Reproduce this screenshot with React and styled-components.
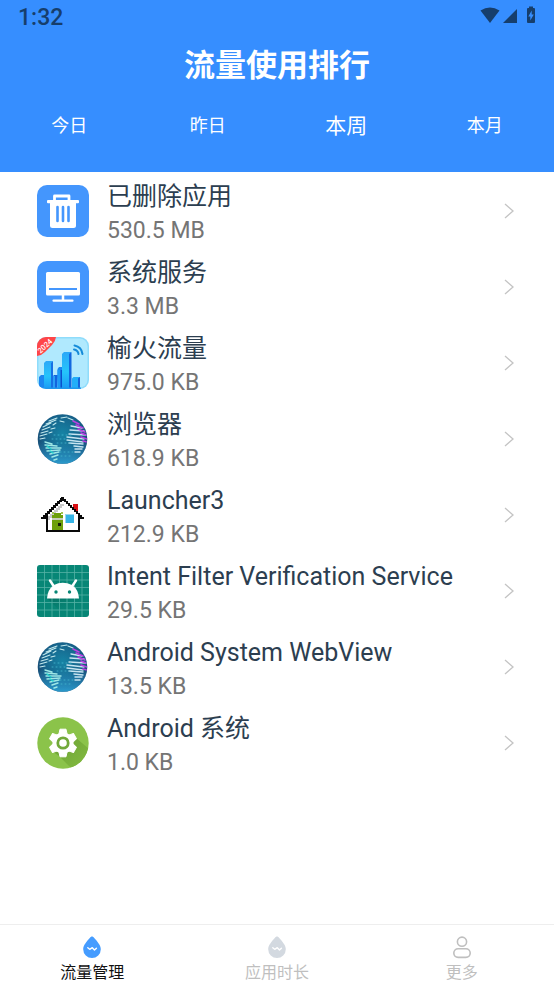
// App.jsx
import React, { useState } from 'react';
import styled, { createGlobalStyle } from 'styled-components';

const GlobalStyle = createGlobalStyle`
    * {
        box-sizing: border-box;
    }

    body {
        margin: 0;
        background: #ffffff;
        font-family: Roboto, 'Noto Sans CJK SC', sans-serif;
    }

    button {
        margin: 0;
        padding: 0;
        border: 0;
        background: none;
        color: inherit;
        font: inherit;
        cursor: pointer;
    }
`;

const Page = styled.div`
    display: flex;
    flex-direction: column;
    min-height: 100vh;
`;

const Header = styled.header`
    background: #368eff;
    color: #ffffff;
    padding-bottom: 20px;
`;

const StatusBar = styled.div`
    display: flex;
    align-items: center;
    justify-content: space-between;
    height: 32px;
    padding: 0 17px 0 18px;
    color: #163e6c;
`;

const Clock = styled.span`
    font-size: 23px;
    font-weight: 500;
    line-height: 32px;
    padding-top: 4px;
`;

const StatusIcons = styled.svg`
    display: block;
    width: 60px;
    height: 32px;
`;

const Title = styled.h1`
    margin: 0;
    font-size: 31px;
    font-weight: 700;
    line-height: 68px;
    text-align: center;
`;

const Tabs = styled.nav`
    display: grid;
    grid-template-columns: repeat(4, 1fr);
    height: 52px;
`;

const Tab = styled.button`
    font-size: ${props => (props.$active ? '21px' : '18px')};
    line-height: 52px;
`;

const AppList = styled.ul`
    flex: 1;
    margin: 0;
    padding: 1px 0 0;
    list-style: none;
`;

const AppRow = styled.button`
    display: flex;
    align-items: center;
    width: 100%;
    height: 76px;
    padding: 0 39px 0 37px;
    text-align: left;
`;

const AppIcon = styled.svg`
    flex: none;
    width: 52px;
    height: 52px;
`;

const AppInfo = styled.span`
    flex: 1;
    min-width: 0;
    margin-left: 18px;
`;

const AppName = styled.span`
    display: block;
    color: #2c3e50;
    font-size: 25px;
    line-height: 40px;
    white-space: nowrap;
    overflow: hidden;
    text-overflow: ellipsis;
`;

const AppUsage = styled.span`
    display: block;
    color: #757575;
    font-size: 23px;
    line-height: 28px;
`;

const Chevron = styled.svg`
    flex: none;
    width: 12px;
    height: 18px;
    fill: none;
    stroke: #c4c4c4;
    stroke-width: 1.3;
`;

const BottomNav = styled.nav`
    display: grid;
    grid-template-columns: repeat(3, 1fr);
    height: 60px;
    border-top: 1px solid #eeeeee;
`;

const NavItem = styled.button`
    display: flex;
    flex-direction: column;
    align-items: center;
    padding-top: 10px;
    color: ${props => (props.$active ? '#111111' : '#bfbfbf')};
`;

const NavIcon = styled.svg`
    width: 24px;
    height: 24px;
`;

const NavLabel = styled.span`
    font-size: 16px;
    line-height: 28px;
`;

const TrashIcon = () => (
    <AppIcon viewBox="0 0 52 52" aria-hidden="true">
        <rect width="52" height="52" rx="10" fill="#4496fd" />
        <path d="M17.5 16v-5h14.5v5" fill="none" stroke="#fff" strokeWidth="2.8" strokeLinejoin="round" />
        <rect x="10" y="15" width="32" height="3.2" rx="1" fill="#fff" />
        <path d="M13 17h26v23.500a2.500 2.500 0 0 1-2.500 2.500h-21a2.500 2.500 0 0 1-2.500-2.500z" fill="#fff" />
        <path d="M20.500 22v14M26 22v14M31.500 22v14" stroke="#4496fd" strokeWidth="2.600" strokeLinecap="round" />
    </AppIcon>
);

const MonitorIcon = () => (
    <AppIcon viewBox="0 0 52 52" aria-hidden="true">
        <rect width="52" height="52" rx="10" fill="#4496fd" />
        <rect x="9" y="11" width="34" height="23.500" rx="1.500" fill="#fff" />
        <path d="M12 28h28" stroke="#4496fd" strokeWidth="2" />
        <path d="M26 34v5" stroke="#fff" strokeWidth="2.500" />
        <path d="M16.500 39.700h19" stroke="#fff" strokeWidth="2.200" strokeLinecap="round" />
    </AppIcon>
);

const TrafficIcon = () => (
    <AppIcon viewBox="0 0 52 52" aria-hidden="true">
        <defs>
            <clipPath id="trafficClip">
                <rect width="52" height="52" rx="9" />
            </clipPath>
            <linearGradient id="trafficBar" x1="0" y1="0" x2="0" y2="1">
                <stop offset="0" stopColor="#2ba8f8" />
                <stop offset="0.550" stopColor="#25c4fb" />
                <stop offset="1" stopColor="#1b9cf5" />
            </linearGradient>
        </defs>
        <g clipPath="url(#trafficClip)">
            <rect width="52" height="52" fill="#8fdcfb" />
            <rect x="1.500" y="1.500" width="49" height="49" rx="8" fill="#b0e9fe" />
            <path d="M2 40l2-2h4v13h-6z" fill="#1b86f0" />
            <path d="M15 40l2-2h4l-1 13h-5z" fill="#1265dd" />
            <path d="M12 39h6v12h-6z" fill="#2b9df6" />
            <path d="M7 26l2-2h7l-1.500 2v25H7z" fill="url(#trafficBar)" />
            <path d="M14 26l2-2v27h-2z" fill="#1670e4" />
            <path d="M20.500 32l1.500-2h4v21h-5.500z" fill="#1987f0" />
            <path d="M25 17l2-2h7v36h-9z" fill="url(#trafficBar)" />
            <path d="M32 17l2.500-2v36H32z" fill="#1268df" />
            <path d="M20.500 33h4.500v18h-4.500z" fill="#1d9bf6" />
            <path d="M23.500 33h1.500v18h-1.500z" fill="#0b50cd" />
            <path d="M35 41.500l1.500-1.500h6.500v11h-8z" fill="#22aef9" />
            <path d="M41 41.500l2-1.500v11h-2z" fill="#1464dc" />
            <path d="M0 50.500h44v1.500H0z" fill="#2098ed" />
            <path d="M37 12.500a5.500 5.500 0 0 1 4.500 4.500M37.500 8.500a10 10 0 0 1 8 8.500" fill="none" stroke="#168bd9" strokeWidth="2" strokeLinecap="round" />
            <path d="M0 0h19q-.5 4.500-4 8l-7 7q-3.500 3.500-8 4z" fill="#ff4548" />
            <text x="8" y="11.500" transform="rotate(-43 8 9)" textAnchor="middle" fill="#fff" fontSize="7.500" fontWeight="500">2024</text>
        </g>
    </AppIcon>
);

const GlobeIcon = ({ id }) => (
    <AppIcon viewBox="0 0 52 52" aria-hidden="true">
        <defs>
            <radialGradient id={`${id}Sea`} cx="0.5" cy="0.4" r="0.6">
                <stop offset="0" stopColor="#1684a5" />
                <stop offset="0.650" stopColor="#17628a" />
                <stop offset="1" stopColor="#193f68" />
            </radialGradient>
            <linearGradient id={`${id}Glow`} x1="0" y1="0" x2="0" y2="1">
                <stop offset="0.550" stopColor="#2ca5d8" stopOpacity="0" />
                <stop offset="1" stopColor="#2ca5d8" stopOpacity="0.9" />
            </linearGradient>
            <clipPath id={`${id}Clip`}>
                <circle cx="25.500" cy="26" r="24.500" />
            </clipPath>
        </defs>
        <circle cx="25.500" cy="26" r="24.800" fill={`url(#${id}Sea)`} />
        <circle cx="25.500" cy="26" r="24.800" fill={`url(#${id}Glow)`} />
        <g clipPath={`url(#${id}Clip)`} fill="none" strokeLinecap="round">
            <path
                d="M12 8l8-3M9 11l10-4M6 14l8-4M5 17l8-3M4 20l7-2M3 23l7-2M3 26l5-1M16 12l3-2M14 16l4-1M12 20l3-1M24 5l6-1M23 8l4 1M31 5l5 2"
                stroke="#c2e9ed"
                strokeWidth="1.100"
            />
            <path
                d="M8 29l7 2M8 32l12 1M9 35l15 0M10 38l13-1M13 41l9-2M15 44l6-2M17 47l3-1"
                stroke="#9fe8e6"
                strokeWidth="1.400"
            />
            <path
                d="M34 13l11 2M33 17l14 1M32 21l17 1M30 24l17 2M30 27l16 2M32 30l14 1M37 33l9 1M38 36l7 0M38 39l5 0"
                stroke="#c6e4f0"
                strokeWidth="1.400"
            />
            <path d="M36 8l6 3M39 12l7 3M41 16l7 3M44 20l5 2M44 24l6 2M46 28l4 1" stroke="#b93fe0" strokeWidth="1.600" />
            <path d="M17 22h17M15 26h16M20 30h13M23 39h13M24 43h11" stroke="#48b9cf" strokeWidth="0.8" strokeDasharray="1 3" />
            <path d="M10 33l4 3M13 38l3 2" stroke="#25d3ca" strokeWidth="1.500" />
        </g>
    </AppIcon>
);

const HouseIcon = () => (
    <AppIcon viewBox="0 0 52 52" aria-hidden="true" shapeRendering="crispEdges">
        <path d="M36 15h5v12h-5z" fill="#d80f13" />
        <path d="M25 9h2v2h2v2h2v2h2v2h2v2h2v2h2v2h2v2h2v17H9V25h2v-2h2v-2h2v-2h2v-2h2v-2h2v-2h2v-2h2z" fill="#fff" />
        <path d="M11 31v-4h2v-2h2v-2h2v-2h2v-2h2v-2h2v-2h4v2h-2v2h-2v2h-2v2h-2v2h-2v2h-2v2h-2v2z" fill="#c9c9c9" />
        <path
            d="M24 8h3v2h2v2h2v2h2v2h2v2h2v2h2v2h2v2h2v2h2v2h2v2h-4v13H9V30H4v-2h2v-2h2v-2h2v-2h2v-2h2v-2h2v-2h2v-2h2v-2h2zM25 12v1h-2v2h-2v2h-2v2h-2v2h-2v2h-2v2h-2v16h30V25h-2v-2h-2v-2h-2v-2h-2v-2h-2v-2h-2v-2h-2v-1z"
            fill="#090909"
            fillRule="evenodd"
        />
        <path d="M15 30v-4h2v-2h7v2h2v4z" fill="#6da00b" />
        <path d="M15 23h2v2h-2zM24 23h2v2h-2z" fill="#9fc44e" />
        <path d="M15 29h11v2H15z" fill="#c5cbb9" />
        <path d="M15 31h11v10H15z" fill="#6da00b" />
        <path d="M21 34h3v3h-3z" fill="#171f0c" />
        <path d="M28 25h9v9h-9z" fill="#35b4e6" />
        <path d="M28 25h9v1h-8v8h-1z" fill="#99d7ef" />
    </AppIcon>
);

const RobotIcon = () => (
    <AppIcon viewBox="0 0 52 52" aria-hidden="true">
        <defs>
            <linearGradient id="robotShade" x1="0" y1="0" x2="1" y2="1">
                <stop offset="0" stopColor="#05685c" stopOpacity="0.8" />
                <stop offset="0.7" stopColor="#078676" stopOpacity="0" />
            </linearGradient>
            <clipPath id="robotClip">
                <rect width="52" height="52" rx="3" />
            </clipPath>
        </defs>
        <g clipPath="url(#robotClip)">
            <rect width="52" height="52" fill="#078676" />
            <path d="M10 33l19 19h23V43L41 33z" fill="url(#robotShade)" />
            <path
                d="M7.500 0v52M15 0v52M22.500 0v52M30 0v52M37.500 0v52M45 0v52M0 7.500h52M0 15h52M0 22.500h52M0 30h52M0 37.500h52M0 45h52"
                stroke="#54b1a5"
                strokeWidth="0.8"
            />
        </g>
        <path d="M13 15.500l4 6M39 15.500l-4 6" stroke="#fff" strokeWidth="2.400" strokeLinecap="round" />
        <path d="M10 33.500q.5-9 7-13.500 8.500-4.500 18 0 6.500 4.500 7 13.500z" fill="#fff" />
        <circle cx="19" cy="27" r="1.700" fill="#078676" />
        <circle cx="32.500" cy="27" r="1.700" fill="#078676" />
    </AppIcon>
);

const GearIcon = () => (
    <AppIcon viewBox="0 0 52 52" aria-hidden="true">
        <defs>
            <clipPath id="gearClip">
                <circle cx="26" cy="26" r="25.700" />
            </clipPath>
            <linearGradient id="gearShade" x1="0.2" y1="0.2" x2="0.9" y2="0.9">
                <stop offset="0" stopColor="#6fa637" />
                <stop offset="1" stopColor="#82b93f" />
            </linearGradient>
        </defs>
        <circle cx="26" cy="26" r="25.700" fill="#8bc34a" />
        <g clipPath="url(#gearClip)">
            <path d="M15 34l7 5 13 13h17V32L38 20z" fill="url(#gearShade)" />
        </g>
        <circle cx="26" cy="26" r="10.500" fill="#fff" />
        {[0, 60, 120, 180, 240, 300].map(angle => (
            <path
                key={angle}
                d="M23 12.200h6l1 4.500 2 3h-12l2-3z"
                transform={`rotate(${angle} 26 26)`}
                fill="#fff"
                stroke="#fff"
                strokeWidth="1"
                strokeLinejoin="round"
            />
        ))}
        <circle cx="26" cy="26" r="5.200" fill="#fff" stroke="#72a93a" strokeWidth="2.800" />
    </AppIcon>
);

const DropIcon = ({ color }) => (
    <NavIcon viewBox="0 0 24 24" aria-hidden="true">
        <path d="M12 1.500c.8 0 1.500.6 2.200 1.400 3 3.400 6.600 7.200 6.600 11.400a8.800 8.800 0 0 1-17.600 0c0-4.200 3.600-8 6.600-11.400.7-.8 1.400-1.400 2.200-1.400z" fill={color} />
        <path d="M7.800 12.800l1.900 1.500 2.600-1.600 2.200 2.200 1.900-1.700" fill="none" stroke="#fff" strokeWidth="1.400" strokeLinecap="round" strokeLinejoin="round" />
    </NavIcon>
);

const PersonIcon = () => (
    <NavIcon viewBox="0 0 24 24" aria-hidden="true" fill="none" stroke="#bfbfbf" strokeWidth="1.600">
        <circle cx="12" cy="6.700" r="4.600" />
        <rect x="3.800" y="13.800" width="16.400" height="8.600" rx="4.300" />
    </NavIcon>
);

const tabs = ['今日', '昨日', '本周', '本月'];

const apps = [
    { name: '已删除应用', usage: '530.5 MB', icon: <TrashIcon /> },
    { name: '系统服务', usage: '3.3 MB', icon: <MonitorIcon /> },
    { name: '榆火流量', usage: '975.0 KB', icon: <TrafficIcon /> },
    { name: '浏览器', usage: '618.9 KB', icon: <GlobeIcon id="browser" /> },
    { name: 'Launcher3', usage: '212.9 KB', icon: <HouseIcon /> },
    { name: 'Intent Filter Verification Service', usage: '29.5 KB', icon: <RobotIcon /> },
    { name: 'Android System WebView', usage: '13.5 KB', icon: <GlobeIcon id="webview" /> },
    { name: 'Android 系统', usage: '1.0 KB', icon: <GearIcon /> },
];

const App = () => {
    const [activeTab, setActiveTab] = useState('本周');

    return (
        <Page lang="zh-CN">
            <GlobalStyle />
            <Header>
                <StatusBar>
                    <Clock>1:32</Clock>
                    {/* Wifi, signal and charging battery */}
                    <StatusIcons viewBox="0 0 60 32" fill="currentColor" aria-hidden="true">
                        <path d="M3.500 10.500Q13 4.500 22.500 10.500L13 23z" />
                        <path d="M40 9v14H26z" />
                        <path
                            fillRule="evenodd"
                            d="M52 6.500h4V8h1q1 0 1 1v13q0 1-1 1h-6q-1 0-1-1V9q0-1 1-1h1zM54.700 10.500l-3.400 6h2v4l3.500-6h-2.100z"
                        />
                    </StatusIcons>
                </StatusBar>
                <Title>流量使用排行</Title>
                <Tabs>
                    {tabs.map(tab => (
                        <Tab key={tab} type="button" $active={tab === activeTab} onClick={() => setActiveTab(tab)}>
                            {tab}
                        </Tab>
                    ))}
                </Tabs>
            </Header>
            <AppList>
                {apps.map(app => (
                    <li key={app.name}>
                        <AppRow type="button">
                            {app.icon}
                            <AppInfo>
                                <AppName>{app.name}</AppName>
                                <AppUsage>{app.usage}</AppUsage>
                            </AppInfo>
                            <Chevron viewBox="0 0 12 18" aria-hidden="true">
                                <path d="M2 2l8 7-8 7" />
                            </Chevron>
                        </AppRow>
                    </li>
                ))}
            </AppList>
            <BottomNav>
                <NavItem type="button" $active>
                    <DropIcon color="#459cff" />
                    <NavLabel>流量管理</NavLabel>
                </NavItem>
                <NavItem type="button">
                    <DropIcon color="#d3d9e0" />
                    <NavLabel>应用时长</NavLabel>
                </NavItem>
                <NavItem type="button">
                    <PersonIcon />
                    <NavLabel>更多</NavLabel>
                </NavItem>
            </BottomNav>
        </Page>
    );
};

export default App;
